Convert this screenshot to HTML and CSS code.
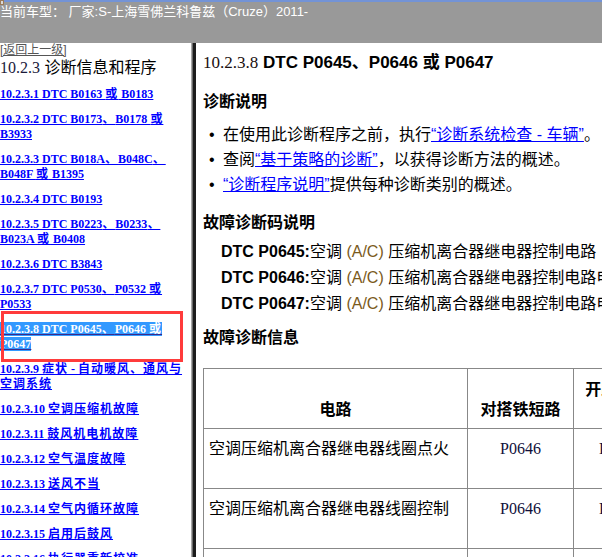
FILE: index.html
```html
<!DOCTYPE html>
<html lang="zh-CN">
<head>
<meta charset="utf-8">
<title>10.2.3.8 DTC P0645、P0646 或 P0647</title>
<link rel="stylesheet" href="styles.css">
</head>
<body>
<header class="topbar">
  <div class="topline"><span class="tinyicon"></span></div>
  <div class="model">当前车型： 厂家:S-上海雪佛兰科鲁兹（Cruze）2011-</div>
</header>
<div class="main">
  <nav class="nav">
    <a class="back" href="#">[返回上一级]</a>
    <div class="nav-title"><span class="num">10.2.3</span> 诊断信息和程序</div>
    <div class="nav-list">
      <p class="nav-item"><a href="#">10.2.3.1 DTC B0163 <span class="zh">或</span> B0183</a></p>
      <p class="nav-item"><a href="#">10.2.3.2 DTC B0173<span class="zh">、</span>B0178 <span class="zh">或</span><br>B3933</a></p>
      <p class="nav-item"><a href="#">10.2.3.3 DTC B018A<span class="zh">、</span>B048C<span class="zh">、</span><br>B048F <span class="zh">或</span> B1395</a></p>
      <p class="nav-item"><a href="#">10.2.3.4 DTC B0193</a></p>
      <p class="nav-item"><a href="#">10.2.3.5 DTC B0223<span class="zh">、</span>B0233<span class="zh">、</span><br>B023A <span class="zh">或</span> B0408</a></p>
      <p class="nav-item"><a href="#">10.2.3.6 DTC B3843</a></p>
      <p class="nav-item"><a href="#">10.2.3.7 DTC P0530<span class="zh">、</span>P0532 <span class="zh">或</span><br>P0533</a></p>
      <p class="nav-item current"><a href="#">10.2.3.8 DTC P0645<span class="zh">、</span>P0646 <span class="zh">或</span><br>P0647</a><span class="mark"></span></p>
      <p class="nav-item"><a href="#">10.2.3.9 <span class="zh">症状</span> - <span class="zh">自动暖风、通风与</span><br><span class="zh">空调系统</span></a></p>
      <p class="nav-item"><a href="#">10.2.3.10 <span class="zh">空调压缩机故障</span></a></p>
      <p class="nav-item"><a href="#">10.2.3.11 <span class="zh">鼓风机电机故障</span></a></p>
      <p class="nav-item"><a href="#">10.2.3.12 <span class="zh">空气温度故障</span></a></p>
      <p class="nav-item"><a href="#">10.2.3.13 <span class="zh">送风不当</span></a></p>
      <p class="nav-item"><a href="#">10.2.3.14 <span class="zh">空气内循环故障</span></a></p>
      <p class="nav-item"><a href="#">10.2.3.15 <span class="zh">启用后鼓风</span></a></p>
      <p class="nav-item"><a href="#">10.2.3.16 <span class="zh">执行器重新校准</span></a></p>
    </div>
  </nav>
  <div class="divider"></div>
  <main class="content">
    <h1 class="title"><span class="num">10.2.3.8</span> DTC P0645、P0646 或 P0647</h1>
    <h2 class="sec">诊断说明</h2>
    <ul class="bullets">
      <li>在使用此诊断程序之前，执行<a href="#">“诊断系统检查 - 车辆”</a>。</li>
      <li>查阅<a href="#">“基于策略的诊断”</a>，以获得诊断方法的概述。</li>
      <li><a href="#">“诊断程序说明”</a>提供每种诊断类别的概述。</li>
    </ul>
    <h2 class="sec sec-dtc">故障诊断码说明</h2>
    <div class="dtcs">
      <p class="dtc"><b>DTC P0645:</b>空调 <span class="term">(A/C)</span> 压缩机离合器继电器控制电路</p>
      <p class="dtc"><b>DTC P0646:</b>空调 <span class="term">(A/C)</span> 压缩机离合器继电器控制电路电压过低</p>
      <p class="dtc"><b>DTC P0647:</b>空调 <span class="term">(A/C)</span> 压缩机离合器继电器控制电路电压过高</p>
    </div>
    <h2 class="sec sec-info">故障诊断信息</h2>
    <table class="info">
      <colgroup><col class="c1"><col class="c2"><col class="c3"><col class="c4"><col class="c5"></colgroup>
      <thead>
        <tr><th>电路</th><th>对搭铁短路</th><th>开路/电阻过大</th><th>对电压短路</th><th>信号性能</th></tr>
      </thead>
      <tbody>
        <tr><td>空调压缩机离合器继电器线圈点火</td><td class="code">P0646</td><td class="code">P0646</td><td class="code">—</td><td class="code">—</td></tr>
        <tr><td>空调压缩机离合器继电器线圈控制</td><td class="code">P0646</td><td class="code">P0646</td><td class="code">P0647</td><td class="code">—</td></tr>
        <tr><td>空调压缩机离合器线圈电源电压</td><td class="code">1</td><td class="code">1</td><td class="code">—</td><td class="code">—</td></tr>
      </tbody>
    </table>
  </main>
</div>
</body>
</html>
```
FILE: styles.css
```css
html, body {
  margin: 0;
  padding: 0;
}
body {
  width: 602px;
  height: 557px;
  overflow: hidden;
  background: #fff;
  color: #000;
  font-family: "Liberation Sans", "Noto Sans CJK SC", sans-serif;
}

/* top bar */
.topbar {
  height: 43px;
  background: #999999;
  color: #fff;
}
.topline {
  height: 2px;
  background: #7393d6;
  display: flex;
}
.tinyicon {
  width: 4px;
  height: 5px;
  background: #d8d8d8;
  border: 1px solid #9a7a5a;
  box-sizing: border-box;
}
.model {
  font-size: 13px;
  line-height: 16px;
  padding-top: 2px;
  white-space: nowrap;
}

/* main split */
.main {
  display: flex;
  height: 514px;
  overflow: hidden;
}
.nav {
  width: 191px;
  flex: none;
  overflow: hidden;
}
.divider {
  width: 5px;
  flex: none;
  background: linear-gradient(to right, #a8a8a8 0, #a8a8a8 1px, #6a6a6a 1px, #6a6a6a 2px, #1c1c1c 2px);
}
.content {
  flex: 1;
  min-width: 0;
  overflow: hidden;
  padding-left: 7px;
}

/* nav */
.back {
  display: block;
  font-size: 12px;
  line-height: 14px;
  color: #555;
  text-decoration: underline;
  white-space: nowrap;
}
.nav-title {
  margin-top: 1px;
  font-size: 16px;
  line-height: 20px;
  color: #000;
  font-family: "Liberation Sans", "Noto Sans CJK SC", sans-serif;
  white-space: nowrap;
}
.nav-title .num {
  font-family: "Liberation Serif", serif;
  color: #1a1a3a;
}
.nav-list {
  margin-top: 9px;
}
.nav-item {
  margin: 0 0 10px;
  font-family: "Liberation Serif", "Noto Sans CJK SC", serif;
  font-weight: bold;
  font-size: 12px;
  line-height: 15px;
  white-space: nowrap;
}
.nav-item a {
  color: #0000ff;
  text-decoration: underline;
}
.nav-item .zh {
  letter-spacing: 1px;
}
.nav-item.current {
  position: relative;
}
.nav-item.current a {
  background: #3399ff;
  color: #fff;
  text-decoration-color: #3a2a8a;
}
.mark {
  position: absolute;
  left: 1px;
  top: -11px;
  width: 182px;
  height: 51px;
  border: 3px solid #ff3b3b;
  box-sizing: border-box;
}

/* content */
.title {
  margin: 10px 0 0;
  font-size: 17px;
  line-height: 20px;
  font-weight: bold;
  white-space: nowrap;
}
.title .num {
  font-family: "Liberation Serif", serif;
  font-weight: normal;
  color: #1a1010;
}
.sec {
  margin: 19px 0 0;
  font-size: 16px;
  line-height: 20px;
  font-weight: bold;
  white-space: nowrap;
}
.sec-dtc {
  margin-top: 16px;
}
.sec-info {
  margin-top: 11px;
}
.bullets {
  list-style: none;
  margin: 10px 0 0;
  padding: 0;
  font-size: 16px;
  line-height: 25px;
}
.bullets li {
  white-space: nowrap;
}
.bullets li::before {
  content: "•";
  display: inline-block;
  width: 20px;
  padding-left: 6px;
  box-sizing: border-box;
}
.bullets a {
  color: #0000ff;
  text-decoration: underline;
}
.dtcs {
  margin-top: 6px;
  padding-left: 18px;
}
.dtc {
  margin: 0;
  font-size: 16px;
  line-height: 26px;
  white-space: nowrap;
}
.term {
  color: #7a5a1c;
}

/* table */
.info {
  margin-top: 20px;
  border-collapse: collapse;
  table-layout: fixed;
  width: 640px;
  border: 1px solid #888;
}
.info col.c1 { width: 264px; }
.info col.c2 { width: 106px; }
.info col.c3 { width: 92px; }
.info col.c4 { width: 100px; }
.info col.c5 { width: 78px; }
.info th,
.info td {
  border: 1px solid #888;
  font-size: 16px;
  line-height: 20px;
}
.info th {
  height: 47px;
  padding: 4px 5px 8px;
  vertical-align: bottom;
  text-align: center;
  font-weight: bold;
}
.info td {
  height: 39px;
  padding: 10px 5px 10px;
  vertical-align: top;
  white-space: nowrap;
}
.info td.code {
  text-align: center;
  font-family: "Liberation Serif", serif;
  color: #10103a;
}
```
